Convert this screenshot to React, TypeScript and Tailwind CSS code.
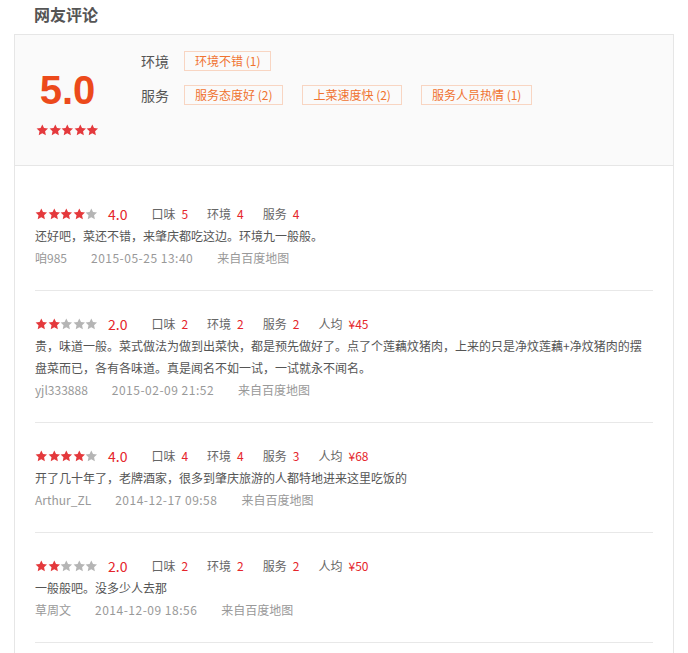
import React from 'react';

const FONT = { fontFamily: '"Microsoft YaHei", "Noto Sans CJK SC", sans-serif' };

interface Review {
  stars: number;
  score: string;
  taste: number;
  env: number;
  service: number;
  price?: string;
  text: string;
  user: string;
  date: string;
}

const reviews: Review[] = [
  {
    stars: 4,
    score: '4.0',
    taste: 5,
    env: 4,
    service: 4,
    text: '还好吧，菜还不错，来肇庆都吃这边。环境九一般般。',
    user: '咱985',
    date: '2015-05-25 13:40',
  },
  {
    stars: 2,
    score: '2.0',
    taste: 2,
    env: 2,
    service: 2,
    price: '¥45',
    text: '贵，味道一般。菜式做法为做到出菜快，都是预先做好了。点了个莲藕炆猪肉，上来的只是净炆莲藕+净炆猪肉的摆盘菜而已，各有各味道。真是闻名不如一试，一试就永不闻名。',
    user: 'yjl333888',
    date: '2015-02-09 21:52',
  },
  {
    stars: 4,
    score: '4.0',
    taste: 4,
    env: 4,
    service: 3,
    price: '¥68',
    text: '开了几十年了，老牌酒家，很多到肇庆旅游的人都特地进来这里吃饭的',
    user: 'Arthur_ZL',
    date: '2014-12-17 09:58',
  },
  {
    stars: 2,
    score: '2.0',
    taste: 2,
    env: 2,
    service: 2,
    price: '¥50',
    text: '一般般吧。没多少人去那',
    user: '草周文',
    date: '2014-12-09 18:56',
  },
];

function Star({ on }: { on: boolean }) {
  return (
    <svg viewBox="0 0 24 24" className="w-[12.6px] h-[12.6px]">
      <path
        d="M12 0.8l3.3 7 7.6.9-5.6 5.3 1.5 7.6L12 17.8l-6.8 3.8 1.5-7.6-5.6-5.3 7.6-.9z"
        fill={on ? '#e4393c' : '#b5b5b5'}
      />
    </svg>
  );
}

function Stars({ n }: { n: number }) {
  return (
    <div className="flex">
      {[0, 1, 2, 3, 4].map(i => (
        <Star key={i} on={i < n} />
      ))}
    </div>
  );
}

function Tag({ children }: { children: React.ReactNode }) {
  return (
    <span className="h-[20px] px-[10px] border border-[#f8d5c2] text-[12px] leading-[18px] text-[#f07330] whitespace-nowrap">
      {children}
    </span>
  );
}

function Rate({ label, value }: { label: string; value: React.ReactNode }) {
  return (
    <span className="text-[12px] text-[#666]">
      {label}
      <span className="ml-[6px] text-[#e5252b]">{value}</span>
    </span>
  );
}

export default function App() {
  return (
    <div className="bg-white w-[688px]" style={FONT}>
      <h2 className="h-[34px] pl-[34px] text-[16px] leading-[28px] font-bold text-[#555]">网友评论</h2>
      <div className="ml-[14px] w-[660px] border border-[#e6e6e6]">
        <div className="h-[131px] bg-[#fafafa] border-b border-[#e6e6e6] flex">
          <div className="w-[105px] flex flex-col items-center pt-[35px]">
            <div
              className="text-[40px] leading-[40px] font-bold text-[#ec4a1b]"
              style={{ fontFamily: '"Liberation Sans", Arial, sans-serif' }}
            >
              5.0
            </div>
            <div className="mt-[14px]">
              <Stars n={5} />
            </div>
          </div>
          <div className="pl-[21px] pt-[16px] flex flex-col gap-[14px]">
            <div className="flex items-center">
              <span className="w-[43px] text-[14px] text-[#555] leading-[20px]">环境</span>
              <Tag>环境不错 (1)</Tag>
            </div>
            <div className="flex items-center">
              <span className="w-[43px] text-[14px] text-[#555] leading-[20px]">服务</span>
              <div className="flex gap-[19px]">
                <Tag>服务态度好 (2)</Tag>
                <Tag>上菜速度快 (2)</Tag>
                <Tag>服务人员热情 (1)</Tag>
              </div>
            </div>
          </div>
        </div>
        <div className="px-[20px] pt-[15px] pb-[40px]">
          {reviews.map((r, i) => (
            <div key={i} className="border-b border-[#e8e8e8] pt-[22px] pb-[21px]">
              <div className="h-[22px] flex items-center">
                <Stars n={r.stars} />
                <span className="ml-[10px] text-[14px] text-[#e5252b]">{r.score}</span>
                <div className="ml-[24px] flex gap-[19px]">
                  <Rate label="口味" value={r.taste} />
                  <Rate label="环境" value={r.env} />
                  <Rate label="服务" value={r.service} />
                  {r.price && <Rate label="人均" value={r.price} />}
                </div>
              </div>
              <p className="text-[12px] leading-[22px] text-[#555]">{r.text}</p>
              <div className="h-[22px] flex items-center gap-[24px] text-[12px] text-[#999]">
                <span>{r.user}</span>
                <span className="tracking-[0.5px]">{r.date}</span>
                <span>来自百度地图</span>
              </div>
            </div>
          ))}
        </div>
      </div>
    </div>
  );
}
